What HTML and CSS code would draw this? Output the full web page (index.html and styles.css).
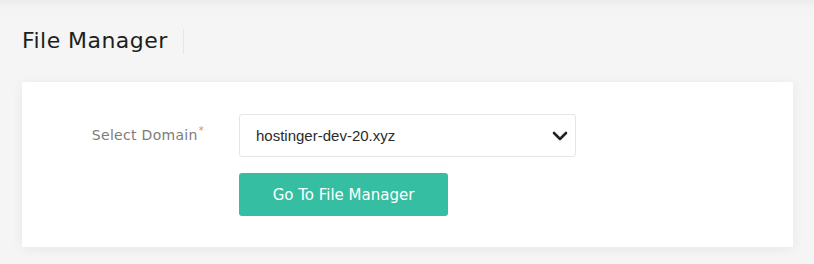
FILE: index.html
```html
<!DOCTYPE html>
<html>
<head>
<meta charset="utf-8">
<link rel="stylesheet" href="styles.css">
</head>
<body>
<div class="page">
  <div class="header">
    <h1 class="title">File Manager</h1>
    <span class="divider"></span>
  </div>
  <div class="card">
    <div class="form-row">
      <label class="label">Select Domain<span class="req">*</span></label>
      <div class="field">
        <div class="select">
          <span class="select-text">hostinger-dev-20.xyz</span>
          <svg class="chev" width="16" height="10" viewBox="0 0 16 10"><path d="M2 2 L8 8 L14 2" fill="none" stroke="#222" stroke-width="2.6" stroke-linecap="round" stroke-linejoin="round"/></svg>
        </div>
        <button class="btn">Go To File Manager</button>
      </div>
    </div>
  </div>
</div>
</body>
</html>
```

FILE: styles.css
```css
html, body { margin: 0; padding: 0; }
body {
  background: #f4f4f4;
  font-family: "DejaVu Sans", "Noto Sans", sans-serif;
  width: 814px;
  height: 264px;
  overflow: hidden;
}
.page {
  height: 264px;
  box-sizing: border-box;
  padding: 0 21px 0 22px;
  background: linear-gradient(to bottom, #ececec 0px, #f3f3f3 8px, #f5f5f5 20px, #f5f5f5 100%);
}
.header {
  display: flex;
  align-items: center;
  height: 82px;
}
.title {
  margin: 0;
  font-size: 22px;
  font-weight: 500;
  color: #1d1e20;
  letter-spacing: 0.45px;
  line-height: 26px;
}
.divider {
  width: 1px;
  height: 25px;
  background: #e6e6e6;
  margin-left: 15px;
}
.card {
  background: #fff;
  height: 165px;
  box-sizing: border-box;
  padding: 32px 0 0 0;
  box-shadow: 0 2px 12px rgba(0,0,0,0.06);
}
.form-row {
  display: flex;
  align-items: flex-start;
}
.label {
  width: 217px;
  box-sizing: border-box;
  text-align: right;
  padding-right: 35px;
  font-size: 14px;
  color: #7c7c7c;
  line-height: 43px;
  letter-spacing: 0.3px;
}
.req {
  color: #f27a7a;
  font-size: 10px;
  vertical-align: 6px;
  margin-left: 1px;
  line-height: 0;
}
.field {
  display: flex;
  flex-direction: column;
  gap: 16px;
}
.select {
  width: 337px;
  height: 43px;
  box-sizing: border-box;
  border: 1px solid #e5e5ea;
  border-radius: 3px;
  display: flex;
  align-items: center;
  justify-content: space-between;
  padding: 0 7px 0 16px;
}
.select-text {
  font-family: "Liberation Sans", "Roboto", sans-serif;
  font-size: 15px;
  color: #2b2b2b;
}
.btn {
  width: 209px;
  height: 43px;
  border: none;
  border-radius: 3px;
  background: #36bea2;
  color: #fff;
  font-family: "DejaVu Sans", sans-serif;
  font-size: 15px;
  padding: 0;
}
```
